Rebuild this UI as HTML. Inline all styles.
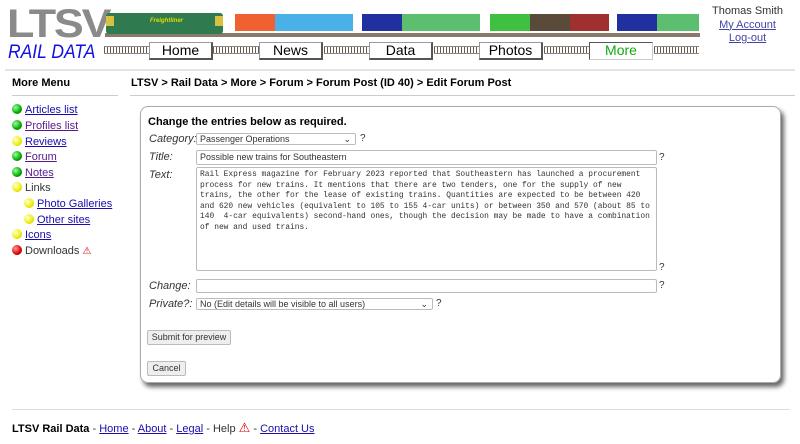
<!DOCTYPE html>
<html><head><meta charset="utf-8"><style>
*{margin:0;padding:0;box-sizing:border-box}
body{width:800px;height:444px;background:#fff;font-family:"Liberation Sans",Arial,sans-serif;font-size:11px;color:#000;position:relative;overflow:hidden}
.a{position:absolute}
a{color:#1a0dab;text-decoration:underline}
.lk{color:#3333cc}
.nav{position:absolute;top:42px;height:18px;width:64px;background:#fff;border:1px solid #999;border-right:2px solid #555;border-bottom:2px solid #555;font-size:14px;text-align:center;line-height:15px}
.trk{position:absolute;top:46px;height:8px;background:repeating-linear-gradient(90deg,#6b5a4a 0 1px,#fff 1px 3px);border-top:1px solid #888;border-bottom:1px solid #888}
.c{position:absolute;height:17px;top:14px}
.b{position:absolute;left:12px;width:10px;height:10px;border-radius:50%}
.g{background:radial-gradient(circle at 35% 35%,#9f9,#0a0 60%,#050)}
.y{background:radial-gradient(circle at 35% 35%,#ffd,#ee0 60%,#990)}
.r{background:radial-gradient(circle at 35% 35%,#f99,#d00 60%,#600)}
.m{position:absolute;font-size:11px;line-height:12px}
.lab{position:absolute;left:149px;font-style:italic;font-size:11px;color:#333}
.in{position:absolute;border:1px solid #bbb;border-radius:2px;background:#fff;font-size:9px;padding-left:3px;line-height:12px;color:#333}
.q{position:absolute;font-size:10px;color:#333}
.btn{position:absolute;border:1px solid #bbb;background:#eee;font-size:9px;color:#333;text-align:center;line-height:13px;border-radius:2px}
</style></head><body>
<div class="a" style="left:7px;top:5px;font-size:40px;font-weight:bold;color:#8a8a8a;letter-spacing:-2px;line-height:38px;transform:scaleX(1.12);transform-origin:left">LTSV</div>
<div class="a" style="left:8px;top:42px;font-size:19px;font-style:italic;color:#1010e0;line-height:21px;transform:scaleX(0.92);transform-origin:left">RAIL DATA</div>
<!-- train -->
<div class="a" style="left:105px;top:33px;width:595px;height:4px;background:#8a7a6a"></div>
<div class="a" style="left:106px;top:13px;width:117px;height:21px;background:#2f7a4e;border-radius:3px"></div>
<div class="a" style="left:106px;top:16px;width:8px;height:10px;background:#d8c040"></div>
<div class="a" style="left:215px;top:16px;width:8px;height:10px;background:#d8c040"></div>
<div class="a" style="left:150px;top:18px;font-size:6px;font-style:italic;font-weight:bold;color:#dd0">Freightliner</div>
<div class="c" style="left:235px;width:40px;background:#f06030"></div>
<div class="c" style="left:275px;width:78px;background:#4ab0e8"></div>
<div class="c" style="left:362px;width:40px;background:#2030a0"></div>
<div class="c" style="left:402px;width:78px;background:#5cbf70"></div>
<div class="c" style="left:490px;width:40px;background:#40c040"></div>
<div class="c" style="left:530px;width:40px;background:#5a4a3a"></div>
<div class="c" style="left:570px;width:39px;background:#a03030"></div>
<div class="c" style="left:617px;width:40px;background:#2030a0"></div>
<div class="c" style="left:657px;width:42px;background:#5cbf70"></div>
<div class="trk" style="left:104px;width:45px"></div>
<div class="trk" style="left:213px;width:46px"></div>
<div class="trk" style="left:324px;width:45px"></div>
<div class="trk" style="left:434px;width:45px"></div>
<div class="trk" style="left:544px;width:45px"></div>
<div class="trk" style="left:654px;width:45px"></div>
<div class="nav" style="left:149px">Home</div>
<div class="nav" style="left:259px">News</div>
<div class="nav" style="left:369px">Data</div>
<div class="nav" style="left:479px">Photos</div>
<div class="nav" style="left:589px;color:#1a1;border:1px solid #555;border-right:1px solid #ccc;border-bottom:1px solid #ccc">More</div>
<div class="a" style="left:700px;top:5px;width:95px;text-align:center;font-size:11px;line-height:13.5px;color:#333">Thomas Smith<br><a class="lk" style="color:#4444aa">My Account</a><br><a style="color:#4444aa">Log-out</a></div>
<div class="a" style="left:5px;top:69px;width:790px;height:2px;background:#e4e4e4"></div>
<div class="a" style="left:12px;top:77px;font-size:11px;font-weight:bold">More Menu</div>
<div class="a" style="left:12px;top:95px;width:106px;height:1px;background:#ccc"></div>
<div class="a" style="left:131px;top:77px;font-size:11px;font-weight:bold">LTSV &gt; Rail Data &gt; More &gt; Forum &gt; Forum Post (ID 40) &gt; Edit Forum Post</div>
<div class="a" style="left:130px;top:95px;width:665px;height:1px;background:#ccc"></div>
<div class="b g" style="top:104px"></div><a class="m" style="left:25px;top:104px">Articles list</a>
<div class="b g" style="top:120px"></div><a class="m" style="left:25px;top:120px;color:#551a8b">Profiles list</a>
<div class="b y" style="top:136px"></div><a class="m" style="left:25px;top:136px">Reviews</a>
<div class="b g" style="top:151px"></div><a class="m" style="left:25px;top:151px;color:#551a8b">Forum</a>
<div class="b g" style="top:167px"></div><a class="m" style="left:25px;top:167px;color:#551a8b">Notes</a>
<div class="b y" style="top:182px"></div><span class="m" style="left:25px;top:182px;color:#333">Links</span>
<div class="b y" style="top:198px;left:24px"></div><a class="m" style="left:37px;top:198px">Photo Galleries</a>
<div class="b y" style="top:214px;left:24px"></div><a class="m" style="left:37px;top:214px">Other sites</a>
<div class="b y" style="top:229px"></div><a class="m" style="left:25px;top:229px">Icons</a>
<div class="b r" style="top:245px"></div><span class="m" style="left:25px;top:245px;color:#333">Downloads <span style="color:#d00;font-size:10px">⚠</span></span>
<!-- form box -->
<div class="a" style="left:140px;top:106px;width:641px;height:277px;border:1px solid #aaa;border-radius:8px;box-shadow:3px 4px 5px #666"></div>
<div class="a" style="left:148px;top:116px;font-size:11px;font-weight:bold">Change the entries below as required.</div>
<div class="lab" style="top:133px">Category:</div>
<div class="in" style="left:196px;top:133px;width:160px;height:12px;line-height:10px">Passenger Operations<span style="position:absolute;right:4px">⌄</span></div>
<div class="q" style="left:360px;top:133px">?</div>
<div class="lab" style="top:151px">Title:</div>
<div class="in" style="left:196px;top:150px;width:461px;height:15px">Possible new trains for Southeastern</div>
<div class="q" style="left:659px;top:152px">?</div>
<div class="lab" style="top:169px">Text:</div>
<div class="in" style="left:196px;top:167px;width:461px;height:104px;font-family:'Liberation Mono',monospace;font-size:7.9px;line-height:10.5px;padding:2px 3px;white-space:pre">Rail Express magazine for February 2023 reported that Southeastern has launched a procurement
process for new trains. It mentions that there are two tenders, one for the supply of new
trains, the other for the lease of existing trains. Quantities are expected to be between 420
and 620 new vehicles (equivalent to 105 to 155 4-car units) or between 350 and 570 (about 85 to
140  4-car equivalents) second-hand ones, though the decision may be made to have a combination
of new and used trains.</div>
<div class="q" style="left:659px;top:262px">?</div>
<div class="lab" style="top:280px">Change:</div>
<div class="in" style="left:196px;top:279px;width:461px;height:14px"></div>
<div class="q" style="left:659px;top:280px">?</div>
<div class="lab" style="top:298px">Private?:</div>
<div class="in" style="left:196px;top:298px;width:237px;height:12px;line-height:10px">No (Edit details will be visible to all users)<span style="position:absolute;right:4px">⌄</span></div>
<div class="q" style="left:436px;top:298px">?</div>
<div class="btn" style="left:147px;top:330px;width:84px;height:15px">Submit for preview</div>
<div class="btn" style="left:147px;top:361px;width:39px;height:15px">Cancel</div>
<div class="a" style="left:12px;top:409px;width:778px;height:1px;background:#ddd"></div>
<div class="a" style="left:12px;top:420px;font-size:11px;color:#333"><b style="color:#000">LTSV Rail Data</b> - <a>Home</a> - <a>About</a> - <a>Legal</a> - Help <span style="color:#d00;font-size:13px">⚠</span> - <a>Contact Us</a></div>
</body></html>
